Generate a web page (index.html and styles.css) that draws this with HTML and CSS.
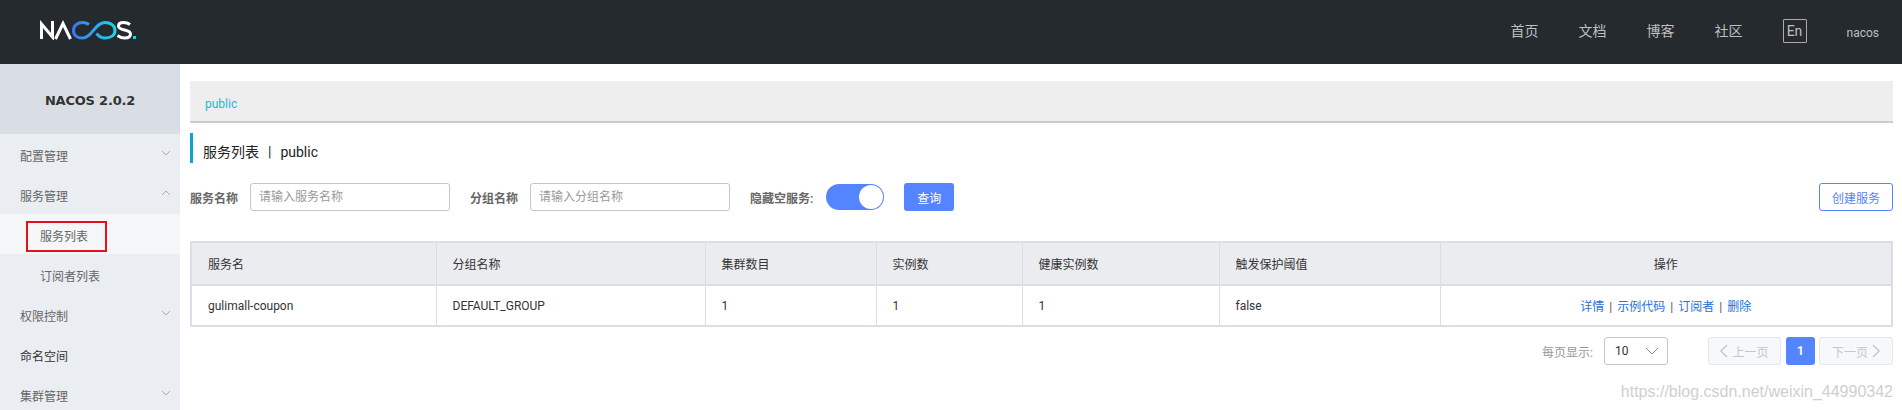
FILE: index.html
```html
<!DOCTYPE html>
<html lang="zh">
<head>
<meta charset="utf-8">
<title>Nacos</title>
<link rel="stylesheet" href="styles.css">
</head>
<body>
<header class="topbar">
  <svg class="logo" width="96" height="20" viewBox="0 0 96 20" fill="none">
    <defs><linearGradient id="inf" x1="0" x2="1" y1="0" y2="0"><stop offset="0" stop-color="#3a78f2"/><stop offset="1" stop-color="#1fd4ea"/></linearGradient></defs>
    <path d="M1.500 19V4L12.500 17V1" stroke="#fff" stroke-width="3"/>
    <path d="M15.500 19L23 3.500L30.500 19" stroke="#fff" stroke-width="3"/>
    <path d="M49 4.500C46.500 2.800 44.500 2.500 42.500 2.500C37.500 2.500 33.500 5.500 33.500 10.500C33.500 15.500 37.500 18 42.500 18C52 18 55 2.500 65 2.500C70.500 2.500 75 5.500 75 10.500C75 15.500 70.500 18 65 18C61 18 58.500 16 56.500 13.500" stroke="url(#inf)" stroke-width="3"/>
    <path d="M90 4.500C88 3 85.500 2.500 83.500 2.500C80 2.500 78.500 4 78.500 6C78.500 11.500 90.500 8.500 90.500 14C90.500 16.500 88 18 84.500 18C82 18 79.500 17 77.500 15.500" stroke="#fff" stroke-width="3"/>
    <rect x="93" y="16" width="3" height="3" fill="#1fd0e8"/>
  </svg>
  <nav class="topnav">
    <a class="topnav-item">首页</a>
    <a class="topnav-item">文档</a>
    <a class="topnav-item">博客</a>
    <a class="topnav-item">社区</a>
    <span class="lang">En</span>
    <span class="user">nacos</span>
  </nav>
</header>
<div class="shell">
  <aside class="sidebar">
    <div class="side-title">NACOS 2.0.2</div>
    <ul class="menu">
      <li class="menu-item">配置管理<svg class="caret" viewBox="0 0 10 6"><path d="M1 1l4 4 4-4"/></svg></li>
      <li class="menu-item">服务管理<svg class="caret" viewBox="0 0 10 6"><path d="M1 5l4-4 4 4"/></svg></li>
      <li class="menu-item sub active"><span class="sub-label">服务列表</span><span class="redbox"></span></li>
      <li class="menu-item sub">订阅者列表</li>
      <li class="menu-item">权限控制<svg class="caret" viewBox="0 0 10 6"><path d="M1 1l4 4 4-4"/></svg></li>
      <li class="menu-item dark">命名空间</li>
      <li class="menu-item">集群管理<svg class="caret" viewBox="0 0 10 6"><path d="M1 1l4 4 4-4"/></svg></li>
    </ul>
  </aside>
  <main class="content">
    <div class="crumb"><span class="crumb-link">public</span></div>
    <h1 class="page-title">服务列表<span class="sep">|</span>public</h1>
    <form class="filters">
      <label class="f-label">服务名称</label>
      <input class="f-input" placeholder="请输入服务名称">
      <label class="f-label second">分组名称</label>
      <input class="f-input" placeholder="请输入分组名称">
      <label class="f-label third">隐藏空服务:</label>
      <span class="toggle"><span class="knob"></span></span>
      <button type="button" class="btn primary">查询</button>
      <button type="button" class="btn outline">创建服务</button>
    </form>
    <table class="grid">
      <colgroup>
        <col class="c1"><col class="c2"><col class="c3"><col class="c4"><col class="c5"><col class="c6"><col>
      </colgroup>
      <thead>
        <tr><th>服务名</th><th>分组名称</th><th>集群数目</th><th>实例数</th><th>健康实例数</th><th>触发保护阈值</th><th class="center">操作</th></tr>
      </thead>
      <tbody>
        <tr>
          <td>gulimall-coupon</td><td>DEFAULT_GROUP</td><td>1</td><td>1</td><td>1</td><td>false</td>
          <td class="center"><a class="lnk">详情</a><span class="bar">|</span><a class="lnk">示例代码</a><span class="bar">|</span><a class="lnk">订阅者</a><span class="bar">|</span><a class="lnk">删除</a></td>
        </tr>
      </tbody>
    </table>
    <div class="pager">
      <span class="pg-label">每页显示:</span>
      <span class="pg-select">10<svg class="pg-caret" viewBox="0 0 14 8"><path d="M1 1l6 6 6-6"/></svg></span>
      <span class="pg-btn prev"><svg class="pg-arrow" viewBox="0 0 8 14"><path d="M7 1L1 7l6 6"/></svg>上一页</span>
      <span class="pg-num">1</span>
      <span class="pg-btn next">下一页<svg class="pg-arrow" viewBox="0 0 8 14"><path d="M1 1l6 6-6 6"/></svg></span>
    </div>
    <div class="watermark">https://blog.csdn.net/weixin_44990342</div>
  </main>
</div>
</body>
</html>
```
FILE: styles.css
```css
* { box-sizing: border-box; }
html, body { margin: 0; height: 410px; overflow: hidden; background: #fff; }
body { font-family: Roboto, "Noto Sans CJK SC", sans-serif; font-size: 12px; color: #333; }
.topbar { height: 64px; background: #252a2f; display: flex; align-items: center; justify-content: space-between; padding: 0 0 0 40px; }
.logo { display: block; margin-top: -4px; }
.topnav { display: flex; align-items: center; color: #bfbfbf; font-size: 14px; padding-right: 23px; margin-top: -1px; }
.topnav-item { margin-right: 40px; width: 28px; margin-bottom: 4px; }
.lang { border: 1px solid #aaa; border-radius: 1px; width: 24px; height: 24px; display: flex; align-items: center; justify-content: center; font-size: 14px; margin-right: 40px; margin-top: -2px; line-height: 1; }
.user { font-size: 12px; margin-top: 2px; }
.shell { display: flex; height: 346px; }
.sidebar { width: 180px; flex: none; background: #eaedf1; overflow: hidden; }
.side-title { height: 70px; padding-top: 2px; background: #d9dee4; display: flex; align-items: center; justify-content: center; font-family: "DejaVu Sans", sans-serif; font-weight: 700; font-size: 13px; letter-spacing: -0.2px; color: #333; }
.menu { list-style: none; margin: 0; padding: 0; }
.menu-item { height: 40px; display: flex; align-items: center; justify-content: space-between; padding: 3px 9px 0 20px; color: #666; }
.menu-item.dark { color: #333; }
.caret { width: 10px; height: 6px; margin-top: -6px; fill: none; stroke: #aaa; stroke-width: 1; }
.sub { padding-left: 40px; position: relative; }
.active { background: #f4f6f8; }
.redbox { position: absolute; left: 26px; top: 7px; width: 81px; height: 31px; border: 2px solid #e60f1e; }
.content { flex: 1; padding: 17px 9px 0 10px; position: relative; min-width: 0; }
.crumb { height: 42px; background: #eee; border-bottom: 2px solid #ccc; padding: 14px 15px 0; line-height: 18px; }
.crumb-link { color: #1cb8dc; }
.page-title { margin: 10px 0 0; height: 30px; border-left: 3px solid #09a4d4; padding-left: 10px; font-size: 14px; font-weight: 400; line-height: 38px; color: #222; }
.sep { margin: 0 9px; }
.filters { display: flex; align-items: center; margin-top: 20px; height: 28px; }
.f-label { font-weight: 600; color: #666; margin-right: 12px; white-space: nowrap; }
.second { margin-left: 20px; }
.third { margin-left: 20px; margin-right: 13px; }
.f-input { width: 200px; height: 28px; border: 1px solid #c4c6cf; border-radius: 3px; padding: 0 8px; font: inherit; outline: none; background: #fff; }
.f-input::placeholder { color: #999; opacity: 1; }
.toggle { width: 58px; height: 26px; border-radius: 13px; background: #5584ff; display: block; position: relative; margin-right: 20px; }
.knob { position: absolute; right: 1px; top: 1px; width: 24px; height: 24px; border-radius: 50%; background: #fff; }
.btn { height: 28px; border-radius: 3px; font: inherit; padding: 0; }
.primary { width: 50px; background: #5584ff; color: #fff; border: 0; }
.outline { width: 74px; background: #fff; color: #5584ff; border: 1px solid #5584ff; margin-left: auto; }
.grid { width: 100%; margin-top: 30px; border-collapse: collapse; table-layout: fixed; border: 2px solid #dcdee3; }
.c1 { width: 245px; } .c2 { width: 269px; } .c3 { width: 171px; } .c4 { width: 146px; } .c5 { width: 197px; } .c6 { width: 221px; }
.grid th, .grid td { border: 1px solid #dcdee3; padding: 0 16px; text-align: left; font-weight: 400; color: #333; }
.grid th { height: 43px; background: #ebecf0; border-bottom-width: 2px; }
.grid td { height: 41px; }
.grid .center { text-align: center; }
.lnk { color: #2a70d8; }
.bar { margin: 0 5px; color: #555; }
.pager { display: flex; align-items: center; justify-content: flex-end; margin-top: 10px; height: 28px; }
.pg-label { color: #999; margin-right: 11px; }
.pg-select { width: 64px; height: 28px; border: 1px solid #c4c6cf; border-radius: 3px; display: flex; align-items: center; justify-content: space-between; padding: 0 8px 0 10px; margin-right: 40px; color: #333; }
.pg-caret { width: 14px; height: 8px; fill: none; stroke: #888; stroke-width: 1; }
.pg-btn { height: 28px; background: #f7f8fa; border: 1px solid #e6e7eb; border-radius: 3px; color: #c4c6cf; display: flex; align-items: center; justify-content: center; gap: 4px; }
.prev { width: 73px; }
.next { width: 74px; }
.pg-num { width: 29px; height: 28px; margin: 0 4px 0 5px; background: #5584ff; color: #fff; font-weight: 700; border-radius: 3px; display: flex; align-items: center; justify-content: center; }
.pg-arrow { width: 8px; height: 14px; fill: none; stroke: #c4c6cf; stroke-width: 1.4; }
.watermark { position: absolute; right: 9px; top: 319px; font-family: "Liberation Sans", sans-serif; font-size: 16px; color: #cfcfcf; }
```
